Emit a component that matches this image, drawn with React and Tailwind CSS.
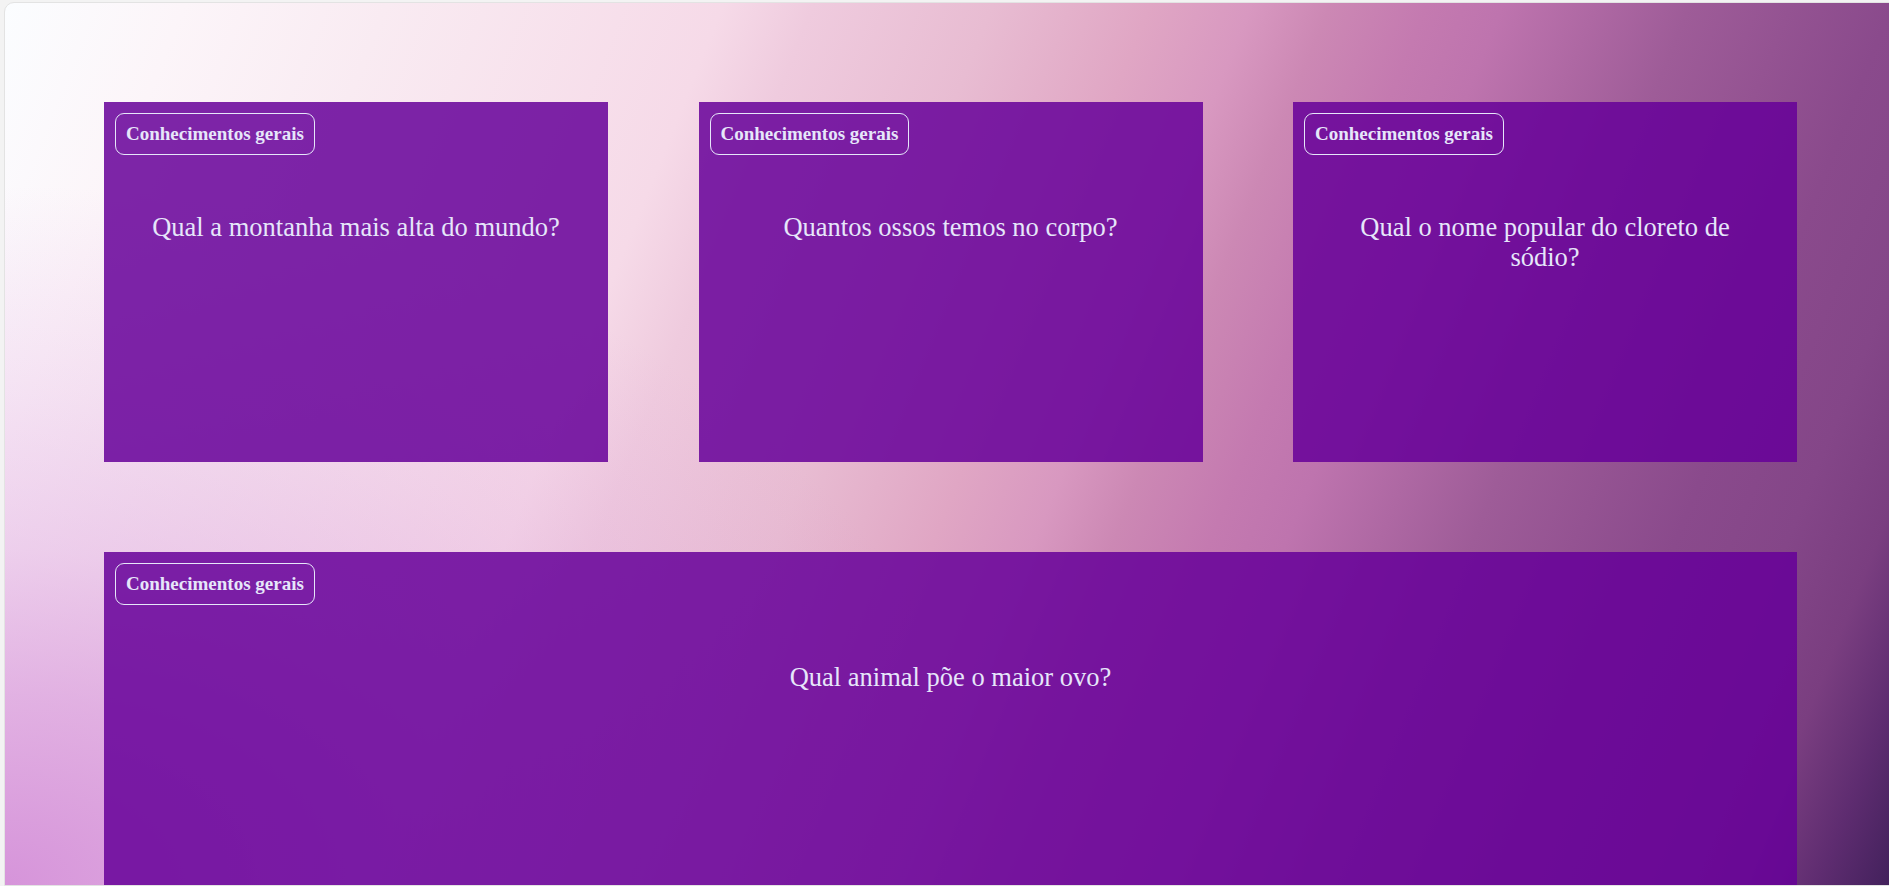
import React from 'react'

const cards = [
  { id: 1, tag: 'Conhecimentos gerais', question: 'Qual a montanha mais alta do mundo?' },
  { id: 2, tag: 'Conhecimentos gerais', question: 'Quantos ossos temos no corpo?' },
  { id: 3, tag: 'Conhecimentos gerais', question: 'Qual o nome popular do cloreto de sódio?' },
  { id: 4, tag: 'Conhecimentos gerais', question: 'Qual animal põe o maior ovo?', wide: true },
]

const QuizCard = ({ tag, question, wide }) => (
  <div
    className={`h-[360px] bg-[rgba(102,0,153,0.85)] p-[11px] text-[#e6e6fa] ${
      wide ? 'col-span-3' : ''
    }`}
  >
    <span className="inline-block rounded-[9px] border border-[#e6e6fa] px-[10px] py-[9px] text-[19px] font-bold leading-[22px]">
      {tag}
    </span>
    <p className="mt-[57px] px-[30px] text-center text-[26.5px] leading-[30px]">{question}</p>
  </div>
)

export default function App() {
  return (
    <div className="h-screen w-full overflow-hidden bg-[#f3f3f3] pl-[4px] pt-[2px] font-['Liberation_Serif',serif]">
      <div className="h-[884px] w-[1893px] overflow-hidden rounded-tl-[10px] border border-[#e3e3e3] bg-[radial-gradient(ellipse_1000px_700px_at_0%_100%,rgba(214,148,218,1)_0%,rgba(214,148,218,0.68)_27%,rgba(214,148,218,0.38)_48%,rgba(214,148,218,0.2)_70%,rgba(214,148,218,0)_100%),linear-gradient(112deg,#fbfdff_0%,#fcf5f9_8%,#f9ebf2_17%,#f6dae8_32%,#efcbde_36%,#e8bcd2_44%,#e0a6c4_51%,#d898c0_55.5%,#cc88b4_59%,#c47ab0_63.3%,#be74ae_66.7%,#9e5c98_75%,#8a4a8c_84%,#844688_89%,#7a3e80_93%,#5e2c70_96.5%,#40205a_100%)] pl-[99px] pt-[99px]">
        {/* Cards grid */}
        <div className="grid grid-cols-[repeat(3,504px)] gap-x-[90.5px] gap-y-[90px]">
          {cards.map((card) => (
            <QuizCard key={card.id} {...card} />
          ))}
        </div>
      </div>
    </div>
  )
}
